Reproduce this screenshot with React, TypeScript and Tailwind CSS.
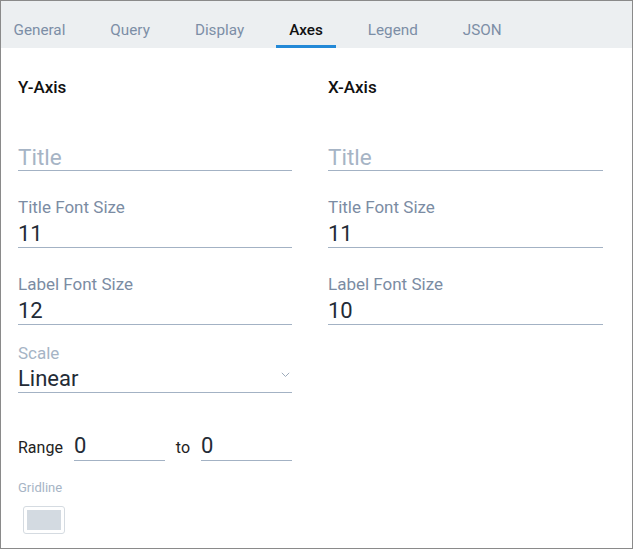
import React from "react";

const tabs = ["General", "Query", "Display", "Axes", "Legend", "JSON"];

function Field({ label, value, placeholder }: { label?: string; value?: string; placeholder?: string }) {
  return (
    <div className="flex flex-col">
      <div className="h-[20px] text-[17px] leading-[20px] text-[#7b8ca3]">{label ?? ""}</div>
      <div className="mt-[3px] h-[28px] pt-px border-b border-[#a3b2c4] text-[22px] leading-[26px]">
        {value !== undefined ? (
          <span className="text-[#232b36]">{value}</span>
        ) : (
          <span className="text-[#a6b4c5] text-[22.5px]">{placeholder}</span>
        )}
      </div>
    </div>
  );
}

function SmallInput({ value }: { value: string }) {
  return (
    <div className="flex-1 h-[28px] border-b border-[#a3b2c4] text-[22px] leading-[26px] text-[#232b36]">
      {value}
    </div>
  );
}

export default function App() {
  return (
    <div className="w-[633px] h-[549px] border border-[#8a8a8a] bg-white flex flex-col overflow-hidden font-['Roboto','Liberation_Sans',sans-serif]">
      <div className="h-[47px] bg-[#eceff1] flex">
        <div className="flex gap-[18px] ml-[-1px]">
          {tabs.map((t) => {
            const active = t === "Axes";
            return (
              <div
                key={t}
                className={
                  active
                    ? "h-[47px] px-[13.5px] pt-[20px] text-[15.25px] leading-[18px] font-medium text-[#111111] border-b-[3px] border-[#2389d7]"
                    : "h-[47px] px-[13.5px] pt-[20px] text-[15.25px] leading-[18px] text-[#7c8ea6] border-b-[3px] border-transparent"
                }
              >
                {t}
              </div>
            );
          })}
        </div>
      </div>

      <div className="flex gap-[36px] pl-[17px] pt-[29px]">
        <div className="w-[274px] flex flex-col">
          <div className="text-[17px] leading-[20px] font-medium text-[#111111]">Y-Axis</div>
          <div className="mt-[23px]">
            <Field placeholder="Title" />
          </div>
          <div className="mt-[26px]">
            <Field label="Title Font Size" value="11" />
          </div>
          <div className="mt-[26px]">
            <Field label="Label Font Size" value="12" />
          </div>
          <div className="mt-[18px] flex flex-col">
            <div className="h-[20px] text-[17px] leading-[20px] text-[#a6b4c5]">Scale</div>
            <div className="relative mt-[2px] h-[28px] pt-px border-b border-[#a3b2c4] text-[22px] leading-[26px] text-[#232b36]">
              Linear
              <svg
                className="absolute right-[2px] top-[7px]"
                width="9"
                height="6"
                viewBox="0 0 9 6"
                fill="none"
              >
                <path d="M0.8 0.8 L4.5 4.5 L8.2 0.8" stroke="#9dabbb" strokeWidth="1" />
              </svg>
            </div>
          </div>
          <div className="mt-[40px] flex items-baseline gap-[11px]">
            <span className="text-[16px] leading-[20px] text-[#222222]">Range</span>
            <SmallInput value="0" />
            <span className="text-[16px] leading-[20px] text-[#222222]">to</span>
            <SmallInput value="0" />
          </div>
          <div className="mt-[19px] text-[13px] leading-[16px] text-[#a6b4c5]">Gridline</div>
          <div className="mt-[10px] ml-[5px] w-[42px] h-[28px] border border-[#d5dbe1] rounded-[3px] p-[3px] flex">
            <div className="flex-1 bg-[#d3dae1]" />
          </div>
        </div>

        <div className="w-[275px] flex flex-col">
          <div className="text-[17px] leading-[20px] font-medium text-[#111111]">X-Axis</div>
          <div className="mt-[23px]">
            <Field placeholder="Title" />
          </div>
          <div className="mt-[26px]">
            <Field label="Title Font Size" value="11" />
          </div>
          <div className="mt-[26px]">
            <Field label="Label Font Size" value="10" />
          </div>
        </div>
      </div>
    </div>
  );
}
